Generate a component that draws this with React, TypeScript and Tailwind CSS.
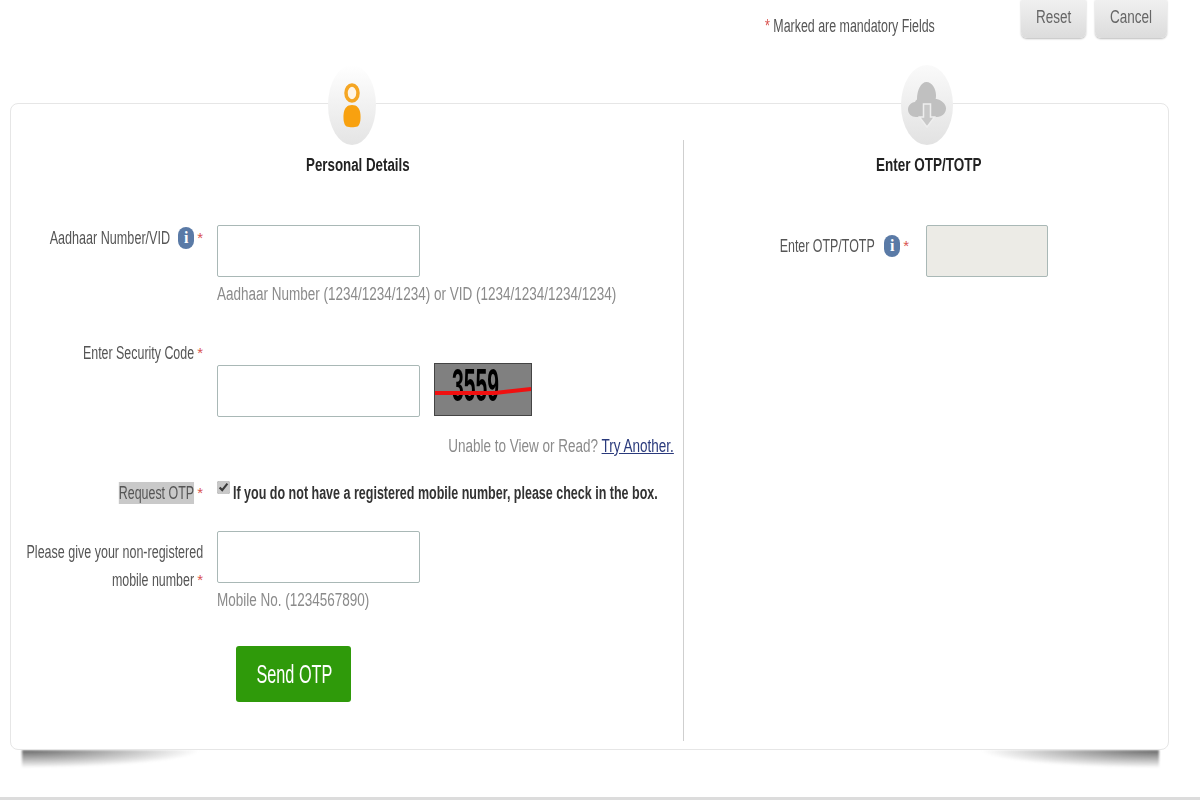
const sans = "font-['Liberation_Sans',Arial,sans-serif]";

function Req() {
  return <span className="ml-[3px] text-[15px] text-[#d9534f]">*</span>;
}

function InfoIcon() {
  return (
    <span className="flex h-[22px] w-[16px] shrink-0 items-center justify-center rounded-full bg-[#5a7aa6] font-['Liberation_Serif',serif] text-[16px] font-bold text-white">
      i
    </span>
  );
}

function Field({ disabled }: { disabled?: boolean }) {
  return (
    <input
      type="text"
      disabled={disabled}
      className={`block h-[52px] rounded-[2px] border border-[#a9b8b6] ${
        disabled ? "w-[122px] bg-[#ecebe6]" : "w-[203px] bg-white"
      }`}
    />
  );
}

function Hint({ children }: { children: React.ReactNode }) {
  return (
    <div className="mt-[6px] h-[22px] origin-left scale-x-[0.75] whitespace-nowrap text-[18px] leading-[22px] text-[#8b8b8b]">
      {children}
    </div>
  );
}

function PersonBadge() {
  return (
    <div className="absolute left-[318px] top-[-38px] flex h-[80px] w-[48px] items-center justify-center rounded-[50%] bg-gradient-to-b from-[#ffffff] to-[#e4e4e4]">
      <svg width="20" height="46" viewBox="0 0 20 46">
        <ellipse cx="10" cy="11" rx="6" ry="8" fill="#fff5e6" stroke="#f5a623" strokeWidth="3.500" />
        <path d="M10 23c-5 0-8 3-8.500 10-.3 5 .5 10 3 11.500 3 1 8 1 11 0 2.500-1.500 3.300-6.500 3-11.500C18 26 15 23 10 23z" fill="#f8a10f" />
      </svg>
    </div>
  );
}

function CloudBadge() {
  return (
    <div className="absolute left-[891px] top-[-38px] flex h-[80px] w-[52px] items-center justify-center rounded-[50%] bg-gradient-to-b from-[#fafafa] to-[#e2e2e2]">
      <svg width="38" height="46" viewBox="0 0 38 46">
        <path d="M8 35c-4.500 0-8-3-8-7.500 0-4 3-7 7-7.500 .5-1 1-2 2-2.500C9 8 13 0 18.500 0c5.500 0 9.500 7 9.500 13 0 1 0 3-.3 4 .3 0 .6 0 .8 0 5 1 9.500 5 9.500 9.500 0 4.500-4 8.500-9 8.500z" fill="#c0c0c0" />
        <path d="M15.500 22h7v13h4L19 45l-7.500-10h4z" fill="#c8c8c8" stroke="#eeeeee" strokeWidth="1.500" />
      </svg>
    </div>
  );
}

export default function App() {
  return (
    <div className={`relative h-[800px] w-[1200px] overflow-hidden bg-white ${sans}`}>
      <div className="flex h-[103px] items-start justify-end pr-[33px]">
        <div className="mr-[85px] mt-[15px] w-[171px] origin-left scale-x-[0.69] whitespace-nowrap text-[18px] leading-[22px] text-[#555]">
          <span className="text-[#d9534f]">* </span>Marked are mandatory Fields
        </div>
        <button className="mt-[-4px] h-[42px] w-[65px] rounded-[6px] bg-gradient-to-b from-[#f2f2f2] to-[#dcdcdc] pt-[1px] text-[18px] text-[#666] shadow-[0_1px_2px_#bbb]">
          <span className="inline-block scale-x-[0.75]">Reset</span>
        </button>
        <button className="ml-[9px] mt-[-4px] h-[42px] w-[72px] rounded-[6px] bg-gradient-to-b from-[#f2f2f2] to-[#dcdcdc] pt-[1px] text-[18px] text-[#666] shadow-[0_1px_2px_#bbb]">
          <span className="inline-block scale-x-[0.75]">Cancel</span>
        </button>
      </div>

      <div className="relative mx-[10px] h-[647px] w-[1159px]">
        <div className="absolute bottom-[-18px] left-[12px] h-[18px] w-[180px] bg-[radial-gradient(ellipse_at_top_left,#666,transparent_70%)] blur-[1px]" />
        <div className="absolute bottom-[-18px] right-[10px] h-[18px] w-[180px] bg-[radial-gradient(ellipse_at_top_right,#666,transparent_70%)] blur-[1px]" />

        <div className="relative flex h-full rounded-[8px] border border-[#e6e6e6] bg-white pb-[8px] pt-[36px] text-[18px] leading-[22px] text-[#555]">
          <div className="w-[673px] shrink-0 border-r border-[#cfcfcf]">
            <h2 className="ml-[295px] mt-[14px] h-[22px] w-[106px] origin-left scale-x-[0.74] whitespace-nowrap text-[18px] font-bold text-[#222]">
              Personal Details
            </h2>

            <div className="mt-[49px] flex">
              <div className="flex w-[192px] shrink-0 items-start justify-end pt-[2px]">
                <span className="mr-[8px] origin-right scale-x-[0.7] whitespace-nowrap">Aadhaar Number/VID</span>
                <InfoIcon />
                <Req />
              </div>
              <div className="ml-[14px]">
                <Field />
                <Hint>Aadhaar Number (1234/1234/1234) or VID (1234/1234/1234/1234)</Hint>
              </div>
            </div>

            <div className="mt-[37px] flex">
              <div className="flex w-[192px] shrink-0 justify-end">
                <span className="origin-right scale-x-[0.69] whitespace-nowrap">Enter Security Code</span>
                <Req />
              </div>
              <div className="ml-[14px] mt-[23px] flex items-start gap-[14px]">
                <Field />
                <div className="relative mt-[-2px] flex h-[53px] w-[98px] items-start border border-[#444] bg-[#808080] pl-[17px]">
                  <span className="origin-left scale-x-[0.45] text-[47px] font-bold leading-[42px] text-black">
                    3559
                  </span>
                  <svg className="absolute left-0 top-[20px]" width="96" height="12" viewBox="0 0 96 12">
                    <path d="M0 9 L60 9 L96 5" stroke="#f01010" strokeWidth="4" fill="none" />
                  </svg>
                </div>
              </div>
            </div>

            <div className="mt-[18px] flex justify-end pr-[9px]">
              <span className="origin-right scale-x-[0.75] whitespace-nowrap text-[#8b8b8b]">
                Unable to View or Read? <a className="text-[#2a3a7c] underline">Try Another.</a>
              </span>
            </div>

            <div className="mt-[25px] flex items-center">
              <div className="flex w-[192px] shrink-0 justify-end">
                <span className="origin-right scale-x-[0.69] whitespace-nowrap bg-[#c9c9c9]">Request OTP</span>
                <Req />
              </div>
              <input type="checkbox" defaultChecked className="ml-[14px] mt-[-3px] h-[17px] w-[13px] self-start accent-[#c8c8c8]" />
              <span className="ml-[3px] origin-left scale-x-[0.695] whitespace-nowrap font-bold text-[#333]">
                If you do not have a registered mobile number, please check in the box.
              </span>
            </div>

            <div className="mt-[27px] flex">
              <div className="flex w-[192px] shrink-0 flex-col items-end pt-[10px]">
                <div className="origin-right scale-x-[0.695] whitespace-nowrap">Please give your non-registered</div>
                <div className="mt-[6px] flex justify-end">
                  <span className="origin-right scale-x-[0.69] whitespace-nowrap">mobile number</span>
                  <Req />
                </div>
              </div>
              <div className="ml-[14px]">
                <Field />
                <Hint>Mobile No. (1234567890)</Hint>
              </div>
            </div>

            <button className="ml-[225px] mt-[35px] h-[56px] w-[115px] whitespace-nowrap rounded-[3px] bg-[#2f9a0a] text-[25px] text-white">
              <span className="inline-block scale-x-[0.65]">Send OTP</span>
            </button>
          </div>

          <div className="flex-1">
            <h2 className="ml-[192px] mt-[14px] h-[22px] w-[106px] origin-left scale-x-[0.75] whitespace-nowrap text-[18px] font-bold text-[#222]">
              Enter OTP/TOTP
            </h2>
            <div className="mt-[49px] flex items-start">
              <div className="flex w-[225px] shrink-0 items-center justify-end pt-[10px]">
                <span className="mr-[9px] origin-right scale-x-[0.69] whitespace-nowrap">Enter OTP/TOTP</span>
                <InfoIcon />
                <Req />
              </div>
              <div className="ml-[17px]">
                <Field disabled />
              </div>
            </div>
          </div>
        </div>

        <PersonBadge />
        <CloudBadge />
      </div>

      <div className="mt-[47px] h-[3px] bg-[#dcdcdc]" />
    </div>
  );
}
